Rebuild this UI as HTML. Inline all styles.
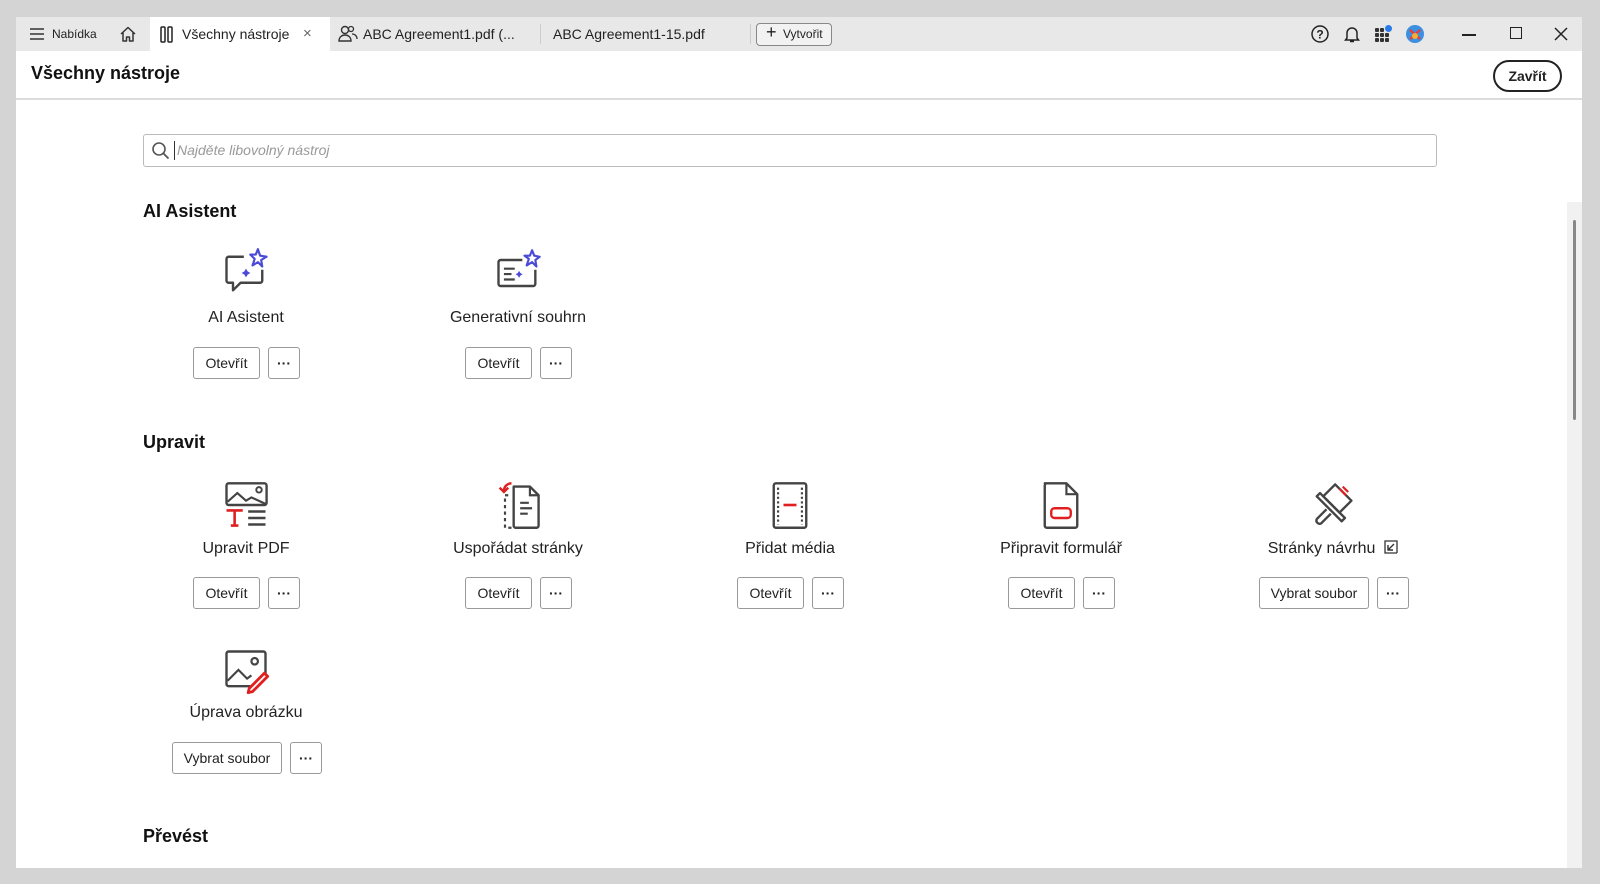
<!DOCTYPE html>
<html><head><meta charset="utf-8">
<style>
*{margin:0;padding:0;box-sizing:border-box}
body{width:1600px;height:884px;background:#d4d4d4;font-family:"Liberation Sans",Arial,sans-serif;color:#222;position:relative;overflow:hidden}
.abs{position:absolute}
#win{position:absolute;left:16px;top:17px;width:1566px;height:851px;background:#fff;overflow:hidden}
#tabs{position:absolute;left:0;top:0;width:1566px;height:34px;background:#e8e8e8}
.t{position:absolute;top:0;height:34px;line-height:34px;font-size:14px;color:#222;white-space:nowrap}
#hdr{position:absolute;left:0;top:34px;width:1566px;height:49px;border-bottom:2px solid #dcdcdc;background:#fff}
h2{position:absolute;font-size:18px;font-weight:bold;color:#111}
.lbl{position:absolute;width:260px;text-align:center;font-size:16px;color:#222}
.btn{position:absolute;height:32px;border:1px solid #999;border-radius:3px;background:#fff;font-size:14px;line-height:30px;text-align:center;color:#222}
.d{font-weight:bold}
.ic{position:absolute;width:52px;height:52px}
.ic *{stroke-opacity:1}
</style></head><body>
<div id="win">
 <div id="tabs">
  <svg class="abs" style="left:13px;top:10px" width="16" height="14"><path d="M1 2h14M1 7h14M1 12h14" stroke="#333" stroke-width="1.6"/></svg>
  <div class="t" style="left:36px;font-size:12px">Nabídka</div>
  <svg class="abs" style="left:103px;top:8px" width="18" height="18" viewBox="0 0 18 18"><path d="M2 9L9 2.5L16 9M4 7.5V16h3.5v-4h3v4H14V7.5" fill="none" stroke="#333" stroke-width="1.5" stroke-linejoin="round"/></svg>
  <div class="abs" style="left:134px;top:0;width:180px;height:34px;background:#fff"></div>
  <svg class="abs" style="left:144px;top:9px" width="14" height="17"><rect x="1" y="1" width="4" height="15" rx="1" fill="none" stroke="#222" stroke-width="1.5"/><rect x="8" y="1" width="4" height="15" rx="1" fill="none" stroke="#222" stroke-width="1.5"/></svg>
  <div class="t" style="left:166px">Všechny nástroje</div>
  <div class="t" style="left:287px;color:#666;font-size:15px">×</div>
  <svg class="abs" style="left:322px;top:8px" width="20" height="18" viewBox="0 0 20 18"><circle cx="7" cy="5" r="3.5" fill="none" stroke="#333" stroke-width="1.4"/><path d="M1 16c0-4 3-6 6-6s6 2 6 6z" fill="none" stroke="#333" stroke-width="1.4"/><circle cx="13" cy="4" r="2.5" fill="none" stroke="#333" stroke-width="1.3"/><path d="M14 9c3 0 5 2 5 5" fill="none" stroke="#333" stroke-width="1.3"/></svg>
  <div class="t" style="left:347px">ABC Agreement1.pdf (...</div>
  <div class="abs" style="left:524px;top:7px;width:1px;height:20px;background:#ccc"></div>
  <div class="t" style="left:537px">ABC Agreement1-15.pdf</div>
  <div class="abs" style="left:734px;top:7px;width:1px;height:20px;background:#ccc"></div>
  <div class="abs" style="left:740px;top:6px;width:76px;height:23px;border:1px solid #888;border-radius:4px;background:#f2f2f2;font-size:12px;line-height:21px;padding-left:26px">Vytvořit</div>
  <div class="abs" style="left:750px;top:4px;font-size:18px;line-height:23px">+</div>
  <svg class="abs" style="left:1294px;top:7px" width="20" height="20"><circle cx="10" cy="10" r="8" fill="none" stroke="#222" stroke-width="1.5"/><text x="10" y="14.5" font-size="12" text-anchor="middle" font-family="Liberation Sans" font-weight="bold" fill="#222">?</text></svg>
  <svg class="abs" style="left:1326px;top:7px" width="20" height="20"><path d="M5 14V9a5 5 0 0 1 10 0v5l1.5 2h-13zM8 17.5h4" fill="none" stroke="#222" stroke-width="1.5"/></svg>
  <svg class="abs" style="left:1358px;top:7px" width="20" height="20"><g fill="#333"><rect x="1" y="4" width="4" height="4" rx="1"/><rect x="6" y="4" width="4" height="4" rx="1"/><rect x="1" y="9" width="4" height="4" rx="1"/><rect x="6" y="9" width="4" height="4" rx="1"/><rect x="11" y="9" width="4" height="4" rx="1"/><rect x="1" y="14" width="4" height="4" rx="1"/><rect x="6" y="14" width="4" height="4" rx="1"/><rect x="11" y="14" width="4" height="4" rx="1"/></g><circle cx="14.5" cy="4.5" r="3.5" fill="#2a7bea"/></svg>
  <svg class="abs" style="left:1389px;top:7px" width="20" height="20"><circle cx="10" cy="10" r="9" fill="#3d8fe0"/><path d="M5 6l10 9M15 6L5 15" stroke="#e83d3d" stroke-width="2.2"/><circle cx="10" cy="12" r="3" fill="#f2b132"/></svg>
  <div class="abs" style="left:1446px;top:17px;width:14px;height:1.5px;background:#222"></div>
  <div class="abs" style="left:1494px;top:10px;width:12px;height:12px;border:1.5px solid #222"></div>
  <svg class="abs" style="left:1537px;top:9px" width="16" height="16"><path d="M2 2l12 12M14 2L2 14" stroke="#222" stroke-width="1.5"/></svg>
 </div>
 <div id="hdr">
  <div class="abs" style="left:15px;top:12px;font-size:18px;font-weight:bold;color:#111">Všechny nástroje</div>
  <div class="abs" style="left:1477px;top:9px;width:69px;height:32px;border:2px solid #222;border-radius:16px;font-size:14px;font-weight:bold;text-align:center;line-height:28px">Zavřít</div>
 </div>
 <div class="abs" style="left:1551px;top:185px;width:15px;height:666px;background:#f1f1f1"></div>
 <div class="abs" style="left:1557px;top:203px;width:3px;height:200px;background:#888;border-radius:2px"></div>
 <div class="abs" style="left:127px;top:117px;width:1294px;height:33px;border:1px solid #bbb;border-radius:3px"></div>
 <svg class="abs" style="left:135px;top:124px" width="20" height="20"><circle cx="8" cy="8" r="6" fill="none" stroke="#555" stroke-width="1.6"/><path d="M12.5 12.5l5 5" stroke="#555" stroke-width="1.8"/></svg>
 <div class="abs" style="left:158px;top:124px;width:1px;height:19px;background:#333"></div>
 <div class="abs" style="left:161px;top:125px;font-size:14px;font-style:italic;color:#999">Najděte libovolný nástroj</div>

 <h2 style="left:127px;top:184px">AI Asistent</h2>
 <h2 style="left:127px;top:415px">Upravit</h2>
 <h2 style="left:127px;top:809px">Převést</h2>

 <svg class="ic" style="left:204px;top:230px" viewBox="0 0 48 48"><path d="M22 9H8a2 2 0 0 0-2 2v20a2 2 0 0 0 2 2h4v7l7-7h18a2 2 0 0 0 2-2V21" fill="none" stroke="#444" stroke-width="2.2" stroke-linejoin="round"/><path d="M35 2l2 6 6 1-5 3 1 6-4-4-5 3 2-6-4-4 5 0z" fill="none" stroke="#4b4bd6" stroke-width="2" stroke-linejoin="round"/><path d="M24 20l1.5 2.5 2.5 1.5-2.5 1.5-1.5 2.5-1.5-2.5-2.5-1.5 2.5-1.5z" fill="#4b4bd6"/></svg>
 <div class="lbl" style="left:100px;top:292px">AI Asistent</div>
 <div class="btn" style="left:177px;top:330px;width:67px">Otevřít</div>
 <div class="btn d" style="left:252px;top:330px;width:32px">···</div>

 <svg class="ic" style="left:476px;top:230px" viewBox="0 0 48 48"><path d="M28 12H8a2 2 0 0 0-2 2v20a2 2 0 0 0 2 2h30a2 2 0 0 0 2-2V21" fill="none" stroke="#444" stroke-width="2.2"/><path d="M11 20h10M11 25h7M11 30h10" stroke="#444" stroke-width="2"/><path d="M37 3l2 5 5 1-4 3 1 6-4-4-5 3 2-6-4-3 5 0z" fill="none" stroke="#4b4bd6" stroke-width="2" stroke-linejoin="round"/><path d="M25 22l1.2 2 2 1.2-2 1.2-1.2 2-1.2-2-2-1.2 2-1.2z" fill="#4b4bd6"/></svg>
 <div class="lbl" style="left:372px;top:292px">Generativní souhrn</div>
 <div class="btn" style="left:449px;top:330px;width:67px">Otevřít</div>
 <div class="btn d" style="left:524px;top:330px;width:32px">···</div>

 <svg class="ic" style="left:204px;top:462px" viewBox="0 0 48 48"><rect x="6" y="4" width="37" height="20" rx="2" fill="none" stroke="#444" stroke-width="2.2"/><path d="M7 21l9-8 8 7 5-3 13 6" fill="none" stroke="#444" stroke-width="2"/><circle cx="36" cy="10" r="2.5" fill="none" stroke="#444" stroke-width="1.8"/><path d="M6 29h15M13.5 29v14M10 43h7" stroke="#e02020" stroke-width="2.4"/><path d="M26 30h16M26 36h16M26 42h16" stroke="#444" stroke-width="2.2"/></svg>
 <div class="lbl" style="left:100px;top:523px">Upravit PDF</div>
 <div class="btn" style="left:177px;top:560px;width:67px">Otevřít</div>
 <div class="btn d" style="left:252px;top:560px;width:32px">···</div>

 <svg class="ic" style="left:476px;top:462px" viewBox="0 0 48 48"><path d="M15 15h-3v30h11" fill="none" stroke="#444" stroke-width="2" stroke-dasharray="3 3"/><path d="M20 7h15l8 8v28a2 2 0 0 1-2 2H22a2 2 0 0 1-2-2z" fill="#fff" stroke="#444" stroke-width="2.2" stroke-linejoin="round"/><path d="M35 7v8h8M26 22h8M26 27h11M26 32h7" fill="none" stroke="#444" stroke-width="2"/><path d="M18 4c-4 0-7 3-7 7" fill="none" stroke="#e02020" stroke-width="2.2"/><path d="M7 8l4 4 4-4" fill="none" stroke="#e02020" stroke-width="2.2"/></svg>
 <div class="lbl" style="left:372px;top:523px">Uspořádat stránky</div>
 <div class="btn" style="left:449px;top:560px;width:67px">Otevřít</div>
 <div class="btn d" style="left:524px;top:560px;width:32px">···</div>

 <svg class="ic" style="left:748px;top:462px" viewBox="0 0 48 48"><rect x="9" y="4" width="30" height="41" rx="2" fill="none" stroke="#444" stroke-width="2.2"/><path d="M13 8v34M35 8v34" stroke="#444" stroke-width="2" stroke-dasharray="2 2.2"/><path d="M18 24h12" stroke="#e02020" stroke-width="2.4"/></svg>
 <div class="lbl" style="left:644px;top:523px">Přidat média</div>
 <div class="btn" style="left:721px;top:560px;width:67px">Otevřít</div>
 <div class="btn d" style="left:796px;top:560px;width:32px">···</div>

 <svg class="ic" style="left:1019px;top:462px" viewBox="0 0 48 48"><path d="M9 4h20l10 10v29a2 2 0 0 1-2 2H11a2 2 0 0 1-2-2V6a2 2 0 0 1 2-2z" fill="none" stroke="#444" stroke-width="2.2" stroke-linejoin="round"/><path d="M29 4v10h10" fill="none" stroke="#444" stroke-width="2"/><rect x="15" y="27" width="18" height="9" rx="3" fill="none" stroke="#e02020" stroke-width="2.2"/></svg>
 <div class="lbl" style="left:915px;top:523px">Připravit formulář</div>
 <div class="btn" style="left:992px;top:560px;width:67px">Otevřít</div>
 <div class="btn d" style="left:1067px;top:560px;width:32px">···</div>

 <svg class="ic" style="left:1291px;top:462px" viewBox="0 0 48 48"><path d="M26 5l15 15-11 11-15-15z" fill="none" stroke="#444" stroke-width="2.2" stroke-linejoin="round"/><path d="M12 13l23 23-3 3L9 16z" fill="none" stroke="#444" stroke-width="2.2" stroke-linejoin="round"/><path d="M18 28l-9 9a3 3 0 0 0 4 4l9-9" fill="none" stroke="#444" stroke-width="2.2"/><path d="M30 9l5 5M33 7l5 5M36 15l-2-2" stroke="#e02020" stroke-width="2"/></svg>
 <div class="lbl" style="left:1187px;top:523px">Stránky návrhu &nbsp;<svg width="14" height="14" style="vertical-align:-1px"><path d="M1 1h12v12M5 1H1v12h12" fill="none" stroke="#333" stroke-width="1.3"/><path d="M10 4L4 10M4 5v5h5" fill="none" stroke="#333" stroke-width="1.4"/></svg></div>
 <div class="btn" style="left:1243px;top:560px;width:110px">Vybrat soubor</div>
 <div class="btn d" style="left:1361px;top:560px;width:32px">···</div>

 <svg class="ic" style="left:204px;top:628px" viewBox="0 0 48 48"><path d="M28 38H8a2 2 0 0 1-2-2V8a2 2 0 0 1 2-2h32a2 2 0 0 1 2 2v20" fill="none" stroke="#444" stroke-width="2.2"/><path d="M7 33l10-10 8 8 4-3" fill="none" stroke="#444" stroke-width="2"/><circle cx="32" cy="15" r="3" fill="none" stroke="#444" stroke-width="2"/><path d="M44 29l-14 14-4 1 1-4 14-14z" fill="none" stroke="#e02020" stroke-width="2.6" stroke-linejoin="round"/></svg>
 <div class="lbl" style="left:100px;top:687px">Úprava obrázku</div>
 <div class="btn" style="left:156px;top:725px;width:110px">Vybrat soubor</div>
 <div class="btn d" style="left:274px;top:725px;width:32px">···</div>
</div>
</body></html>
